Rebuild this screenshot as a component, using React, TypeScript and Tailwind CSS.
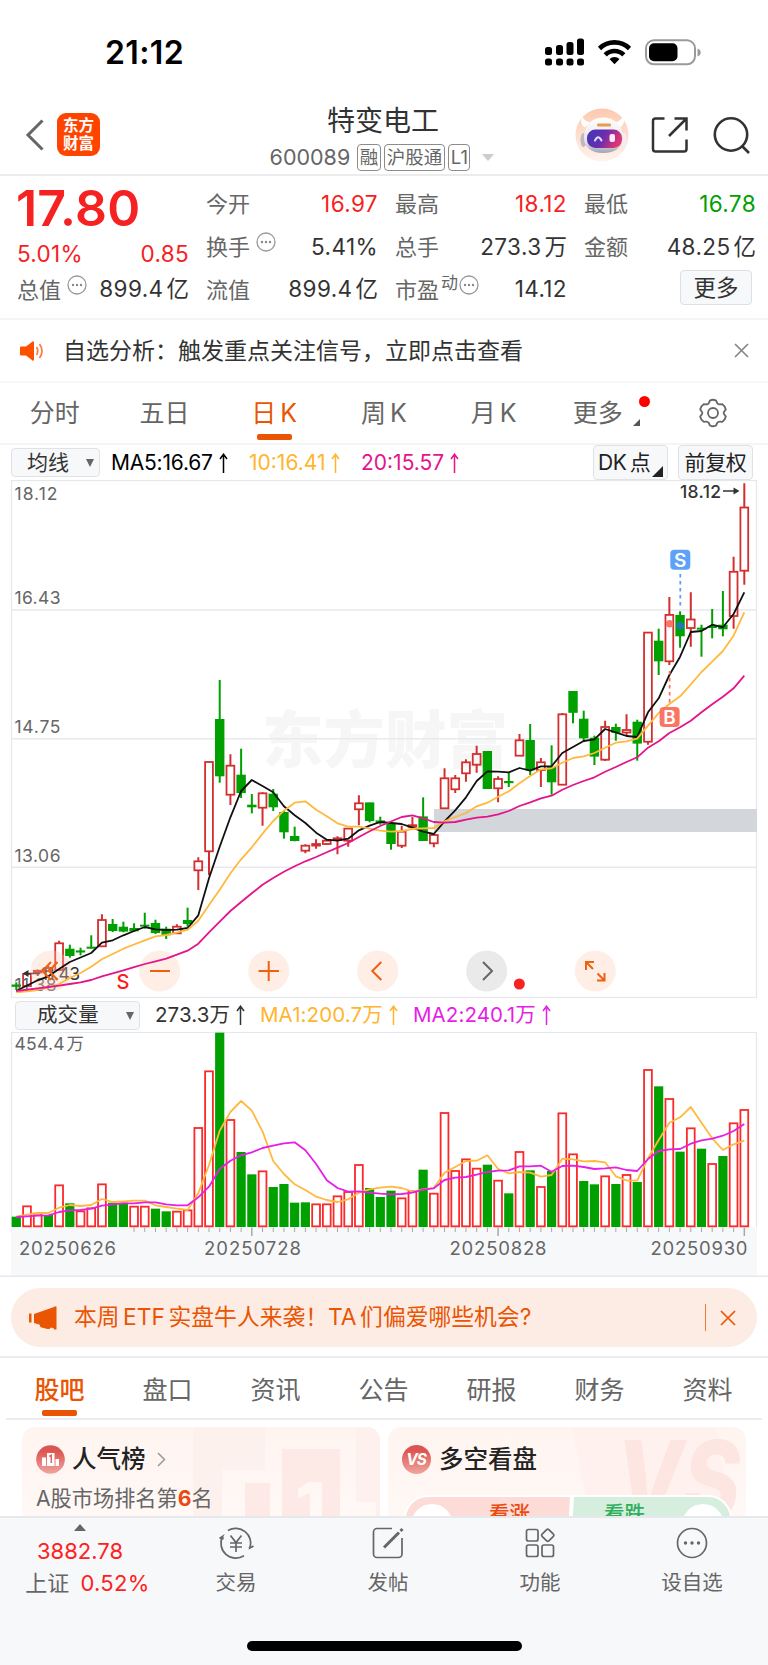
import type { ReactNode } from "react";

// [kind, high, top, bottom, low], kind "r" is hollow red, "g" is solid green
type Candle = ["r" | "g", number, number, number, number];

const CANDLES: Candle[] = [
  ["g", 982.3, 984.8, 986.5, 990], ["r", 973, 974, 986, 987], ["r", 969.5, 970.8, 972.5, 976],
  ["r", 966, 968, 971, 972], ["r", 940.7, 943.3, 970, 970], ["g", 944.7, 949, 955.7, 957.7],
  ["g", 947.7, 950.7, 952.2, 955.3], ["g", 935.3, 947, 948.4, 948.4], ["r", 914.3, 920, 946.3, 947],
  ["g", 919, 924.3, 930.7, 932], ["g", 921.7, 927, 931.3, 932.3], ["g", 923.3, 928.3, 931, 931.7],
  ["g", 912.7, 925, 926.3, 928.7], ["g", 919.7, 923.3, 932.7, 934], ["g", 926.7, 929, 935, 939],
  ["r", 924.3, 926.7, 933.3, 933.7], ["g", 907.7, 920.3, 923.7, 926.7], ["r", 857.3, 861.3, 870.3, 890],
  ["r", 761.7, 762, 851.3, 875.3], ["g", 680, 719.3, 776, 782.7], ["r", 754.3, 765.7, 794.7, 805],
  ["g", 748.7, 775, 792.7, 798], ["g", 794, 805, 807, 813.3], ["r", 792.3, 793.3, 807.7, 825.7],
  ["g", 789, 794, 807, 811], ["g", 811, 812.3, 832, 838.7], ["g", 826.7, 836.3, 840.7, 841.3],
  ["r", 844.3, 845.7, 850.7, 853.3], ["r", 839.3, 844, 845.6, 848.7], ["r", 839.7, 840.7, 844, 845],
  ["r", 836.3, 838.3, 840, 854.3], ["r", 828.3, 828.6, 840.7, 846.7], ["r", 795.3, 803.3, 809.3, 825.3],
  ["g", 802.7, 802.7, 820.7, 822.3], ["g", 816.7, 820.7, 823, 824.7], ["g", 822, 823, 843.7, 849.7],
  ["r", 825.7, 831.7, 845.7, 848], ["r", 817, 825.2, 826.8, 828.7], ["g", 797.3, 816.7, 840.7, 840.7],
  ["r", 833.3, 835, 843.3, 847.3], ["r", 768.3, 778.3, 808.3, 808.3], ["r", 775, 778.3, 789.3, 793],
  ["r", 759.3, 762.3, 773.3, 781.7], ["r", 745.7, 754, 764.7, 772.7], ["g", 751.3, 751.3, 788.7, 788.7],
  ["r", 776.3, 779, 788.3, 802.3], ["g", 772.7, 781.3, 782.9, 787], ["r", 734, 740.3, 755.7, 755.7],
  ["g", 724, 740.3, 770, 775], ["r", 758, 762.3, 770, 787], ["g", 745.3, 767.3, 782, 794.7],
  ["r", 713, 714.3, 784.7, 784.7], ["g", 691.3, 691.3, 712.5, 723.3], ["g", 710.7, 719, 738, 742],
  ["g", 735.7, 738, 756.3, 765], ["r", 720.7, 727, 759.7, 761], ["g", 723.7, 727.3, 732.5, 740.7],
  ["r", 714.3, 730, 732.5, 735.7], ["g", 719.7, 722, 743.3, 760.7], ["r", 632.3, 632.6, 741.7, 744.7],
  ["g", 628.7, 641, 661, 675], ["r", 597, 614.9, 661.3, 665], ["g", 611.3, 615.3, 636, 647.7],
  ["r", 592.3, 619.5, 628, 646.7], ["g", 624.7, 628, 629.4, 656.7], ["g", 609, 626.2, 627.7, 638.3],
  ["g", 591, 625, 629, 636.3], ["r", 556.7, 571.8, 616, 628.7], ["r", 483.3, 507.5, 570.7, 584.7],
];

const MA5 = [
  991, 985.5, 980.3, 976.3, 969, 962, 957.5, 953, 942.7, 940.3, 935.3, 931, 927, 929.3, 930, 929.7, 928,
  915.3, 878.3, 846.7, 817.3, 791, 780, 786, 792.3, 806.3, 815.3, 823, 832.7, 839.7, 840.7, 838.7, 830.3,
  825.7, 822, 823, 824, 827.7, 831.7, 834, 821.3, 810.3, 797.3, 781, 771.3, 771.7, 772.3, 768, 770.7,
  766.3, 766.3, 753, 747, 741, 739.3, 729, 732.3, 736, 737, 712.3, 698.3, 675, 656.7, 632, 631, 624.7,
  627.3, 614, 592.3,
];

const MA10 = [
  992.3, 991.3, 990, 987.3, 984, 978, 973, 966.7, 959.3, 954, 948.7, 944.5, 940.3, 936.3, 935, 932.7, 929.7,
  920.7, 905, 889.7, 873.3, 859.3, 847.3, 833.7, 821, 810.7, 802.7, 801.3, 809.7, 816.3, 823.3, 826.7,
  826.7, 828.7, 830.7, 831.7, 831, 829, 828.3, 828, 821.3, 817, 813, 806.3, 802.7, 796.7, 791.3, 783.3,
  776, 769.3, 768.3, 762.7, 758, 756.3, 753, 747.7, 742.7, 741.3, 738.7, 725.7, 713, 704, 696.3, 684.3,
  672, 661.7, 651, 635.7, 612.3,
];

const MA20 = [
  991, 989.7, 988.3, 987, 985.7, 984, 982.3, 980, 976.3, 973.3, 970.3, 967.2, 964, 961.3, 958.7, 954.7,
  950.7, 943.7, 932.3, 921.7, 911, 902, 893.3, 884.7, 878, 871.7, 866.3, 861.3, 857, 852.3, 847.7, 843, 837,
  831.3, 826, 821.5, 817, 815.3, 818.3, 822, 822.7, 822, 819.7, 817.7, 816.7, 814.3, 811, 806, 802.3, 798.3,
  795.7, 789.7, 785, 781, 777.3, 771.7, 767, 762, 757.3, 747.7, 741.3, 733, 727.3, 720.7, 712.3, 704.3,
  696.7, 688.3, 675.7,
];

// volume series use a 3x vertical unit, 711 is the base line
const VOLUME_COLORS = "grrgrgrrrggrrggrrrrgrggrggggrrrrrgggrrgrrrrrgrgrgrgrrggrgrgrgrgrgrgrr";
const VOLUMES = [
  680, 649, 671, 675, 586, 640, 664, 655, 583, 638, 638, 650, 650, 656, 664, 665, 661, 414, 244, 128, 390,
  486, 553, 544, 591, 582, 638, 637, 643, 643, 619, 606, 525, 594, 621, 602, 625, 604, 539, 611, 369, 543,
  508, 536, 524, 572, 610, 486, 541, 591, 543, 370, 493, 573, 583, 559, 582, 555, 576, 240, 289, 327, 485,
  415, 476, 522, 498, 400, 360,
];
const VOLUME_MA1 = [
  680, 674, 669, 669, 653, 645, 648, 645, 627, 636, 634, 632, 632, 646, 651, 656, 660, 610, 525, 422, 366,
  333, 362, 424, 513, 552, 583, 600, 620, 630, 636, 628, 608, 598, 593, 590, 594, 605, 598, 594, 548, 531,
  513, 512, 496, 537, 550, 546, 548, 560, 555, 506, 508, 514, 513, 517, 559, 571, 572, 505, 450, 398, 382,
  351, 398, 445, 480, 463, 452,
];
const VOLUME_MA2 = [
  681, 679, 677, 676, 666, 661, 660, 656, 647, 643, 640, 640, 637, 637, 643, 646, 646, 622, 590, 537, 512,
  496, 487, 474, 467, 460, 457, 481, 522, 571, 594, 605, 604, 608, 611, 613, 612, 608, 599, 595, 570, 563,
  561, 554, 546, 542, 541, 529, 529, 527, 545, 528, 527, 531, 537, 535, 532, 540, 543, 507, 483, 478, 477,
  461, 451, 446, 437, 423, 402,
];

const RED = "#d32f2f";
const GREEN = "#00a000";

const cx = (i: number) => 16.3 + i * 10.706;
const vy = (v: number) => v / 3 + 990;
const points = (values: number[]) => values.map((v, i) => `${cx(i).toFixed(1)},${v.toFixed(1)}`).join(" ");

function StatusBar() {
  return (
    <div className="flex h-[100px] items-center justify-between pt-1 pr-[67px] pl-[105px] text-black">
      <span className="pt-[2px] text-[32px] leading-none font-semibold tracking-[0.4px]">21:12</span>
      <svg width="156" height="28" viewBox="0 0 156 28">
        <g>
          <rect x="0" y="9" width="7" height="8" rx="2.5" />
          <rect x="11" y="7" width="7" height="10" rx="2.5" />
          <rect x="21.5" y="4" width="7" height="13" rx="2.5" />
          <rect x="32" y="0.5" width="7" height="16.5" rx="2.5" />
          <rect x="0" y="20.5" width="7" height="7" rx="2.5" />
          <rect x="11" y="20.5" width="7" height="7" rx="2.5" />
          <rect x="21.5" y="20.5" width="7" height="7" rx="2.5" />
          <rect x="32" y="20.5" width="7" height="7" rx="2.5" />
        </g>
        <g fill="none" stroke="#000" strokeWidth="4.6">
          <path d="M54.5 10.5a21.5 21.5 0 0 1 30 0" />
          <path d="M60.2 16.8a13.2 13.2 0 0 1 18.6 0" />
        </g>
        <path d="M64.5 21a7.5 7.5 0 0 1 10 0l-5 5.3z" />
        <rect x="101" y="2.3" width="49" height="24" rx="8" fill="none" stroke="#9a9a9a" strokeWidth="2" />
        <rect x="104" y="5.3" width="28.5" height="18" rx="5" />
        <path d="M152.5 10.5q3.2 1.2 3.2 4t-3.2 4z" fill="#9a9a9a" />
      </svg>
    </div>
  );
}

function Badge({ children }: { children: ReactNode }) {
  return (
    <span className="flex h-[27px] items-center rounded-[4px] border border-[#8c8c8c] px-[1.5px] text-[18.5px] leading-none text-[#666]">
      {children}
    </span>
  );
}

function Robot() {
  return (
    <svg width="54" height="56" viewBox="0 0 54 56">
      <defs>
        <linearGradient id="halo" x1="0" y1="0" x2="0" y2="1">
          <stop offset="0" stopColor="#fdc9af" />
          <stop offset="1" stopColor="#fff3ed" />
        </linearGradient>
        <linearGradient id="visor" x1="0" y1="0" x2="1" y2="0.3">
          <stop offset="0" stopColor="#4038b8" />
          <stop offset="0.55" stopColor="#6a2db0" />
          <stop offset="1" stopColor="#e03570" />
        </linearGradient>
        <linearGradient id="shell" x1="0" y1="0" x2="0" y2="1">
          <stop offset="0" stopColor="#fff" />
          <stop offset="0.7" stopColor="#e6e2e8" />
          <stop offset="1" stopColor="#9fa3b4" />
        </linearGradient>
      </defs>
      <circle cx="27" cy="28" r="26.5" fill="url(#halo)" />
      <path d="M7.5 9.5q-4 6 2 11l6-5q-6-1-8-6zM47.5 9.5q4 6-2 11l-6-5q6-1 8-6z" fill="#fff" />
      <ellipse cx="8.5" cy="33" rx="3" ry="7" fill="#bdb8c2" />
      <ellipse cx="48.5" cy="33" rx="3" ry="7" fill="#f2eef4" />
      <path d="M28 10.5c12 0 20 9 20 20 0 10-8 15.5-20 15.5S9 40 9 30.5c0-11 7-20 19-20z" fill="url(#shell)" />
      <rect x="22" y="16.5" width="14" height="3" rx="1" fill="#e99a54" />
      <rect x="12" y="22.5" width="35" height="18.5" rx="8.5" fill="url(#visor)" />
      <path d="M20 33.5q3-6.5 6.5 0" fill="none" stroke="#d3e4ff" strokeWidth="2" strokeLinecap="round" />
      <rect x="34.5" y="27" width="5.5" height="8" rx="2" fill="#ffe8fb" />
    </svg>
  );
}

function Header() {
  return (
    <header className="relative flex h-[76px] items-center justify-between border-b-2 border-[#ececec] pr-[16px] pb-[5px] pl-[25px]">
      <div className="flex items-center">
        <svg width="20" height="32" viewBox="0 0 20 32" fill="none" stroke="#666" strokeWidth="3">
          <path d="M17.5 1.5L3 16l14.5 14.5" />
        </svg>
        <div className="ml-[12px] flex h-[43px] w-[43px] flex-col items-center justify-center rounded-[9px] bg-[#ff4400] text-[15.5px] leading-[18px] font-bold text-white">
          <span>东方</span>
          <span>财富</span>
        </div>
      </div>
      <div className="absolute inset-x-0 top-0 flex flex-col items-center">
        <h1 className="mt-[6px] pr-[2px] text-[28px] leading-[30px] text-[#333]">特变电工</h1>
        <div className="mt-[8px] flex items-center pr-[2px]">
          <span className="mr-[7px] text-[21.5px] leading-none text-[#666]">600089</span>
          <div className="flex gap-[3.5px]">
            <Badge>融</Badge>
            <Badge>沪股通</Badge>
            <Badge>L1</Badge>
          </div>
          <span className="mr-[2px] ml-[12px] border-x-[6.5px] border-t-[7px] border-x-transparent border-t-[#ccc]" />
        </div>
      </div>
      <div className="flex items-center">
        <Robot />
        <svg className="ml-[22px]" width="38" height="38" viewBox="0 0 38 38" fill="none" stroke="#333" strokeWidth="2.5">
          <path d="M13.5 2.5H4.5a2.5 2.5 0 0 0-2.5 2.5V33a2.5 2.5 0 0 0 2.5 2.5H33a2.5 2.5 0 0 0 2.5-2.5V23.5M23.5 2.5H35.5V14.5M35 3L18 20" />
        </svg>
        <svg className="ml-[23px]" width="40" height="40" viewBox="0 0 40 40" fill="none" stroke="#333" strokeWidth="2.6">
          <circle cx="19" cy="19.5" r="16.2" />
          <path d="M30 31l7 7" />
        </svg>
      </div>
    </header>
  );
}

function InfoDot() {
  return (
    <svg className="mb-[10px] ml-[6px]" width="20" height="20" viewBox="0 0 20 20">
      <circle cx="10" cy="10" r="9" fill="none" stroke="#999" strokeWidth="1.3" />
      <g fill="#888">
        <circle cx="6" cy="10" r="1.2" />
        <circle cx="10" cy="10" r="1.2" />
        <circle cx="14" cy="10" r="1.2" />
      </g>
    </svg>
  );
}

function Stat({ label, value, unit, color = "text-[#333]", extra }: { label: string; value: string; unit?: string; color?: string; extra?: ReactNode }) {
  return (
    <div className="flex h-[42.7px] items-center justify-between leading-none">
      <span className="flex items-center text-[22px] text-[#666]">
        {label}
        {extra}
      </span>
      <span className={`text-[22.5px] tracking-[0.4px] ${color}`}>
        {value}
        {unit && <span className="ml-[3px] tracking-normal">{unit}</span>}
      </span>
    </div>
  );
}

function Quote() {
  return (
    <section className="grid h-[144px] grid-cols-4 gap-x-[17px] border-b-2 border-[#f5f5f5] pt-[7px] pr-[12px] pl-[17px]">
      <div>
        <div className="-ml-[1px] flex h-[50.4px] items-center text-[50px] leading-none font-semibold tracking-[0.2px] text-[#f62222]">17.80</div>
        <div className="flex h-[35px] items-center justify-between pt-[7px] text-[22.5px] leading-none tracking-[0.3px] text-[#f62222]">
          <span>5.01%</span>
          <span>0.85</span>
        </div>
        <Stat label="总值" value="899.4" unit="亿" extra={<InfoDot />} />
      </div>
      <div>
        <Stat label="今开" value="16.97" color="text-[#f62222]" />
        <Stat label="换手" value="5.41%" extra={<InfoDot />} />
        <Stat label="流值" value="899.4" unit="亿" />
      </div>
      <div>
        <Stat label="最高" value="18.12" color="text-[#f62222]" />
        <Stat label="总手" value="273.3" unit="万" />
        <Stat
          label="市盈"
          value="14.12"
          extra={
            <>
              <span className="mb-[13px] ml-[2px] text-[17px]">动</span>
              <span className="-ml-[5px]">
                <InfoDot />
              </span>
            </>
          }
        />
      </div>
      <div>
        <Stat label="最低" value="16.78" color="text-[#00a000]" />
        <Stat label="金额" value="48.25" unit="亿" />
        <div className="flex h-[42px] items-center justify-end pr-[4px] pb-[3px]">
          <button className="h-[35px] w-[72px] rounded-[4px] border border-[#dcdfe4] bg-[#f7f8fa] text-[22.5px] leading-none text-[#333]">更多</button>
        </div>
      </div>
    </section>
  );
}

function Notice() {
  return (
    <div className="flex h-[63px] items-center border-b-2 border-[#f7f7f7] pr-[19px] pl-[20px]">
      <svg width="24" height="20" viewBox="0 0 24 20">
        <path d="M0 6.5q0-1 1-1H6L12.5 0.5q1.5-1 1.5 1V18.5q0 2-1.5 1L6 14.5H1q-1 0-1-1z" fill="#ff5000" />
        <path d="M16.5 6q2.5 4 0 8M19.5 3q5 7 0 14" fill="none" stroke="#ff7a3c" strokeWidth="1.7" />
      </svg>
      <span className="ml-[19px] pt-[1px] text-[23px] leading-none text-[#333]">自选分析：触发重点关注信号，立即点击查看</span>
      <svg className="ml-auto" width="15" height="15" viewBox="0 0 15 15" stroke="#888" strokeWidth="1.7">
        <path d="M1 1l13 13M14 1L1 14" />
      </svg>
    </div>
  );
}

function PeriodTabs() {
  const tabs: [string, string][] = [["分时", ""], ["五日", ""], ["日", "K"], ["周", "K"], ["月", "K"]];
  return (
    <nav className="flex h-[62px] border-b-2 border-[#f5f5f5] text-[25px] leading-none text-[#666]">
      {tabs.map(([tab, suffix]) => (
        <div key={tab} className={`relative flex w-1/7 items-center justify-center ${tab === "日" ? "text-[#ea5504]" : ""}`}>
          {tab}
          {suffix && <span className="ml-[4px]">{suffix}</span>}
          {tab === "日" && <span className="absolute bottom-[3px] h-[6px] w-[35px] rounded-[2px] bg-[#ea5504]" />}
        </div>
      ))}
      <div className="relative flex w-1/7 items-center justify-center pr-[11px]">
        更多
        <span className="absolute top-[13px] right-[8.5px] h-[11px] w-[11px] rounded-full bg-[#ff0000]" />
        <svg className="absolute top-[36px] right-[18px]" width="7" height="7">
          <path d="M7 0V7H0z" fill="#555" />
        </svg>
      </div>
      <div className="flex w-1/7 items-center justify-center">
        <svg width="30" height="30" viewBox="0 0 30 30" fill="none" stroke="#666" strokeWidth="1.8">
          <path d="M12 2.5Q15 1 18 2.5L19.3 5.2Q20.2 6.5 21.8 6.4L24.3 6.2Q27.2 8 27.8 11.5L26 14Q25.4 15 26 16L27.8 18.5Q27.2 22 24.3 23.8L21.8 23.6Q20.2 23.5 19.3 24.8L18 27.5Q15 29 12 27.5L10.7 24.8Q9.8 23.5 8.2 23.6L5.7 23.8Q2.8 22 2.2 18.5L4 16Q4.6 15 4 14L2.2 11.5Q2.8 8 5.7 6.2L8.2 6.4Q9.8 6.5 10.7 5.2z" />
          <circle cx="15" cy="15" r="5" />
        </svg>
      </div>
    </nav>
  );
}

function Up() {
  return (
    <svg className="ml-[6px] inline-block align-[-3px]" width="9" height="20" viewBox="0 0 9 20" fill="none" stroke="currentColor" strokeWidth="1.5">
      <path d="M4.5 1V20M1 6L4.5 1.2L8 6" />
    </svg>
  );
}

function AverageRow() {
  return (
    <div className="flex h-[35px] items-center pr-[15px] pl-[11px] text-[21px] leading-none">
      <div className="flex h-[29px] w-[89px] items-center justify-between rounded-[4px] border border-[#dfe2e7] bg-[#f7f8fa] pr-[5px] pl-[15px] text-[#333]">
        均线
        <span className="border-x-[4.5px] border-t-[8px] border-x-transparent border-t-[#666]" />
      </div>
      <span className="ml-[11px] w-[138px] tracking-[-0.2px] text-black">MA5:16.67<Up /></span>
      <span className="w-[112px] text-[#ffb52e]">10:16.41<Up /></span>
      <span className="text-[#e3148c]">20:15.57<Up /></span>
      <div className="relative ml-auto flex h-[35px] w-[75px] items-center rounded-[4px] border border-[#dfe2e7] bg-[#f7f8fa] pl-[4px] tracking-[-0.3px] text-[#222]">
        DK<span className="ml-[3px]">点</span>
        <svg className="absolute right-[4px] bottom-[2px]" width="11" height="11">
          <path d="M11 0V11H0z" fill="#222" />
        </svg>
      </div>
      <div className="ml-[10px] flex h-[35px] w-[75px] items-center justify-center rounded-[4px] border border-[#dfe2e7] bg-[#f7f8fa] tracking-[-0.3px] text-[#222]">前复权</div>
    </div>
  );
}

function PriceChart() {
  const labels: [string, number][] = [["18.12", 500], ["16.43", 604], ["14.75", 733], ["13.06", 862], ["11.38", 991]];
  return (
    <svg className="block" width="768" height="518" viewBox="0 480 768 518">
      <rect x="11.5" y="480.5" width="745" height="517" fill="#fff" stroke="#e4e7ec" strokeWidth="1.2" />
      <text x="262" y="763" fontSize="62" fontWeight="900" fill="#f6f6f7" textLength="246" lengthAdjust="spacingAndGlyphs">东方财富</text>
      {[610, 738.7, 867.3].map((y) => (
        <path key={y} d={`M11 ${y}H757`} stroke="#e6e9f0" strokeWidth="1.4" />
      ))}
      <rect x="434" y="809" width="323" height="23" fill="#d3d6db" />
      {CANDLES.map(([kind, high, top, bottom, low], i) => {
        const x = cx(i);
        if (kind === "g") {
          return (
            <g key={i} fill={GREEN}>
              <rect x={x - 1} y={high} width="2" height={low - high} />
              <rect x={x - 4.7} y={top - 0.3} width="9.4" height={bottom - top + 0.6} />
            </g>
          );
        }
        return (
          <g key={i} fill="none" stroke={RED} strokeWidth="1.8">
            <path d={`M${x} ${high}V${top}M${x} ${bottom}V${low}`} strokeWidth="2" />
            <rect x={x - 3.9} y={top} width="7.8" height={bottom - top} />
          </g>
        );
      })}

      <g fontSize="17.5" fill="#666">
        {labels.map(([label, y]) => (
          <text key={label} x="14.5" y={y} textLength={label === "18.12" ? 43 : label === "11.38" ? 42 : 46}>{label}</text>
        ))}
      </g>
      <g fontSize="17.5" fill="#333">
        <text x="680" y="497.5" fontWeight="500" textLength="41">18.12</text>
        <text x="41" y="980" textLength="39">11.43</text>
      </g>
      <path d="M723 491H735M40 973.5H28" stroke="#333" strokeWidth="1.5" />
      <path d="M733.5 487.5L739.5 491L733.5 494.5zM28.5 970L22.5 973.5L28.5 977z" fill="#333" />
      <text x="116.5" y="988.5" fontSize="20" fill="#ff1a1a" fontWeight="500">S</text>

      {[51, 159.7, 268.7, 377.7, 595.3].map((x) => (
        <circle key={x} cx={x} cy="971" r="20.5" fill="#fbc9b0" fillOpacity="0.32" />
      ))}
      <circle cx="486.7" cy="971" r="20.5" fill="#eaeaea" />
      <g fill="none" strokeWidth="1.8" strokeLinejoin="round">
        <polyline points={points(MA5)} stroke="#111" />
        <polyline points={points(MA10)} stroke="#ffb93c" />
        <polyline points={points(MA20)} stroke="#e3148c" />
      </g>
      <g fill="none" stroke="#f0600f" strokeWidth="2">
        <path d="M51 962l-8.5 9l8.5 9M57.5 962l-8.5 9l8.5 9" />
        <path d="M150 971H170M258.5 971H279M268.7 961V981" />
        <path d="M381.3 962l-9 9l9 9" />
        <path d="M586 970V962H594M586 962l7 7M597.5 973.5l7 7M597 980.5H604.5V973" />
      </g>
      <path d="M483 962l9 9l-9 9" fill="none" stroke="#666" strokeWidth="2" />
      <circle cx="519.3" cy="984" r="5.5" fill="#f52222" />

      <path d="M680.3 574V606" stroke="#5a9ff8" strokeWidth="1.8" strokeDasharray="3.5 3.5" />
      <circle cx="680.3" cy="625.7" r="3.7" fill="#1f78b4" />
      <rect x="670.3" y="549.7" width="20" height="20" rx="4" fill="#5da1fa" />
      <text x="680.3" y="566.5" fontSize="19" fontWeight="600" fill="#fff" textAnchor="middle">S</text>
      <path d="M669.6 671V703" stroke="#fb7564" strokeWidth="1.8" strokeDasharray="3.5 3.5" />
      <circle cx="669.6" cy="623.7" r="3.7" fill="#fb7564" />
      <rect x="659.6" y="707" width="20" height="20" rx="4" fill="#fb7564" />
      <text x="669.6" y="723.8" fontSize="19" fontWeight="600" fill="#fff" textAnchor="middle">B</text>
    </svg>
  );
}

function VolumeRow() {
  return (
    <div className="flex h-[34px] items-center pl-[15px] text-[20.5px] leading-none tracking-[0.1px]">
      <div className="flex h-[29px] w-[125px] items-center justify-between rounded-[4px] border border-[#dfe2e7] bg-[#f7f8fa] pt-[1px] pr-[5px] pl-[21px] text-[#333]">
        成交量
        <span className="border-x-[4.5px] border-t-[8px] border-x-transparent border-t-[#666]" />
      </div>
      <span className="ml-[15px] w-[105px] text-[#333]">273.3万<Up /></span>
      <span className="w-[153px] text-[#ffb52e]">MA1:200.7万<Up /></span>
      <span className="text-[#e61ee6]">MA2:240.1万<Up /></span>
    </div>
  );
}

function VolumeChart() {
  const dates: [string, number][] = [["20250626", 19], ["20250728", 204], ["20250828", 449.5], ["20250930", 650.5]];
  return (
    <svg className="block" width="768" height="245" viewBox="0 1032 768 245">
      <rect x="11" y="1227" width="746" height="50" fill="#f7f8fa" />
      <path d="M11.5 1227V1032.5H756.5V1227" fill="none" stroke="#e4e7ec" strokeWidth="1.2" />
      <text x="14.5" y="1050" fontSize="17.5" fill="#666">
        <tspan textLength="50">454.4</tspan>
        <tspan x="66.5">万</tspan>
      </text>
      {VOLUMES.map((v, i) =>
        VOLUME_COLORS[i] === "g" ? (
          <rect key={i} x={cx(i) - 4.6} y={vy(v)} width="9.2" height={vy(711) - vy(v)} fill={GREEN} />
        ) : (
          <rect key={i} x={cx(i) - 3.9} y={vy(v)} width="7.8" height={vy(709) - vy(v)} fill="#fff" stroke="#fa2a2a" strokeWidth="1.8" />
        )
      )}
      <g fill="none" strokeWidth="1.8" strokeLinejoin="round">
        <polyline points={points(VOLUME_MA1.map(vy))} stroke="#ffb93c" />
        <polyline points={points(VOLUME_MA2.map(vy))} stroke="#e61ee6" />
      </g>
      {VOLUMES.map((_, i) =>
        i < 11 ? null : (
          <path key={i} d={`M${cx(i)} 1227.5V${[22, 45, 68].includes(i) ? 1236 : 1232}`} stroke="#a8a8a8" strokeWidth={[22, 45, 68].includes(i) ? 1.5 : 1} />
        )
      )}
      <g fontSize="18.5" fill="#666">
        {dates.map(([date, x]) => (
          <text key={date} x={x} y="1255" textLength="97">{date}</text>
        ))}
      </g>
      <path d="M0 1276.3H768" stroke="#e6e8ec" strokeWidth="1.5" />
    </svg>
  );
}

function Banner() {
  return (
    <div className="h-[81px] border-b-2 border-[#ededf0] px-[11px] pt-[11px]">
      <div className="flex h-[59px] items-center rounded-full bg-[#fdece4] pr-[21px] pl-[18px] text-[#ea5504]">
        <svg width="28" height="24" viewBox="0 0 28 24" fill="#ea5504">
          <path d="M0 7.5h2.5v9H0zM5 8L25 1V0.5h2.5V23.5H25V22.5L22 21.5Q21 23.5 18.5 23L12.5 21.5Q10.5 21 10.8 18.8L5 17z" />
        </svg>
        <span className="ml-[17px] text-[22.8px] leading-none">
          本周<span className="mx-[3.5px]">ETF</span>实盘牛人来袭！<span className="mr-[3.5px]">TA</span>们偏爱哪些机会?
        </span>
        <span className="ml-auto h-[27px] w-[1.5px] bg-[#ee7a3c]" />
        <svg className="ml-[14px]" width="16" height="16" viewBox="0 0 16 16" stroke="#ea5504" strokeWidth="1.7">
          <path d="M1 1l14 14M15 1L1 15" />
        </svg>
      </div>
    </div>
  );
}

function SectionTabs() {
  return (
    <nav className="mx-[6px] flex h-[62px] border-b-2 border-[#ededf0] text-[25px] leading-none text-[#666]">
      {["股吧", "盘口", "资讯", "公告", "研报", "财务", "资料"].map((tab, i) => (
        <div key={tab} className={`relative flex flex-1 items-center justify-center pt-[4px] pr-[1px] ${i === 0 ? "font-medium text-[#ea5504]" : ""}`}>
          {tab}
          {i === 0 && <span className="absolute bottom-[2px] h-[6px] w-[35px] rounded-[2px] bg-[#ea5504]" />}
        </div>
      ))}
    </nav>
  );
}

function Cards() {
  return (
    <div className="flex h-[96px] gap-[8px] overflow-hidden px-[22px] pt-[7px]">
      <div className="relative h-[120px] flex-1 overflow-hidden rounded-[13px] bg-gradient-to-b from-[#fff4f0] to-[#fffaf8] pt-[18px] pl-[14px]">
        <svg className="absolute top-0 right-0" width="190" height="92" viewBox="0 0 190 92">
          <path d="M3 0H75V43H32V92H3z" fill="#fdf1ee" />
          <path d="M55 56H80V92H55zM92 22H150V92H132V55H118L108 62V71L120 66V92H92z" fill="#fde9e6" />
          <path d="M166 0H190V92H186V75H166z" fill="#fef0ec" />
        </svg>
        <div className="relative flex items-center">
          <svg width="29" height="29" viewBox="0 0 29 29">
            <defs>
              <linearGradient id="medal" x1="0" y1="0" x2="0" y2="1">
                <stop offset="0.2" stopColor="#dc5552" />
                <stop offset="1" stopColor="#f0a5a0" />
              </linearGradient>
            </defs>
            <circle cx="14.5" cy="14.5" r="14.3" fill="url(#medal)" />
            <path d="M6 12.5H10V21H6zM11 8H18.5V21H11zM19.5 14H23V21H19.5z" fill="#fff" />
            <path d="M13.3 11.5l2-1.2V18" stroke="#df6260" strokeWidth="1.5" fill="none" />
          </svg>
          <span className="ml-[7px] text-[24.5px] leading-none font-medium text-[#222]">人气榜</span>
          <svg className="ml-[11px]" width="9" height="19" viewBox="0 0 9 19" fill="none" stroke="#999" strokeWidth="1.5">
            <path d="M1 3l6.5 6.5L1 16" />
          </svg>
        </div>
        <p className="relative mt-[14px] text-[21.2px] leading-none text-[#666]">
          A股市场排名第<b className="font-bold text-[#ea4a10]">6</b>名
        </p>
      </div>
      <div className="relative h-[120px] flex-1 overflow-hidden rounded-[13px] bg-gradient-to-b from-[#fff4f0] to-[#fffaf8] pt-[18px] pl-[14px]">
        <svg className="absolute top-0 right-0" width="180" height="92" viewBox="0 0 180 92">
          <path d="M6 0H150L164 92H24z" fill="#fef1ee" />
          <text x="50" y="92" fontSize="108" fontWeight="800" fontStyle="italic" fill="#fde5e1" textLength="124" lengthAdjust="spacingAndGlyphs">VS</text>
        </svg>
        <div className="relative flex items-center">
          <div className="flex h-[29px] w-[29px] items-center justify-center rounded-full bg-gradient-to-b from-[#dc5552] from-20% to-[#f0a5a0] pr-[1px] text-[15.5px] leading-none font-bold tracking-[-1px] text-white italic">VS</div>
          <span className="ml-[8px] text-[24.5px] leading-none font-medium text-[#222]">多空看盘</span>
        </div>
        <svg className="absolute top-[68px] left-[16px]" width="328" height="52" viewBox="0 0 328 52">
          <path d="M24 1H167L164 52H1V24A23 23 0 0 1 24 1z" fill="#fddbd6" stroke="#fff" strokeWidth="2" />
          <path d="M169 1H304A23 23 0 0 1 327 24V52H166z" fill="#d5eedd" stroke="#fff" strokeWidth="2" />
          <circle cx="28" cy="30" r="21" fill="#fff" />
          <circle cx="299" cy="30" r="21" fill="#fff" />
          <text x="85" y="26" fontSize="20.5" fontWeight="500" fill="#ea4a10">看涨</text>
          <text x="200" y="26" fontSize="20.5" fontWeight="500" fill="#2fae5c">看跌</text>
        </svg>
      </div>
    </div>
  );
}

function NavItem({ label, children }: { label: string; children: ReactNode }) {
  return (
    <div className="flex w-[152px] flex-col items-center pt-[8px] text-[20.5px] leading-none text-[#666]">
      <svg width="36" height="34" viewBox="0 0 36 34" fill="none" stroke="#666" strokeWidth="1.7">
        {children}
      </svg>
      <span className="mt-[13px]">{label}</span>
    </div>
  );
}

function BottomNav() {
  return (
    <footer className="h-[149px] border-t-2 border-[#e6e8ec] bg-[#f7f8fa]">
      <div className="flex h-[123px]">
        <div className="flex w-[160px] flex-col items-center pt-[6px] text-[22px] leading-none text-[#ff2020]">
          <span className="border-x-[6px] border-b-[7px] border-x-transparent border-b-[#666]" />
          <span className="mt-[9px]">3882.78</span>
          <span className="mt-[10px] flex pl-[15px] tracking-[0.3px]">
            <span className="mr-[11px] text-[22px] tracking-normal text-[#666]">上证</span>0.52%
          </span>
        </div>
        <NavItem label="交易">
          <path d="M10 4.5A15 15 0 0 1 32 22l3.5-2M32 22l-1-1M26 29.8A15 15 0 0 1 4.5 10.5l-3 2M4.5 10.5l.5 3" />
          <path d="M12.5 9.5l5.5 7l5.5-7M12 17H24M12 21H24M18 16.5V26" />
        </NavItem>
        <NavItem label="发帖">
          <path d="M22 2.5H7A3.5 3.5 0 0 0 3.5 6V28A3.5 3.5 0 0 0 7 31.5H28.5A3.5 3.5 0 0 0 32 28V12" />
          <path d="M14 21.5L29 6.5" strokeWidth="3" />
          <path d="M30.5 5L32.5 3" strokeWidth="3" />
        </NavItem>
        <NavItem label="功能">
          <rect x="4.5" y="3.5" width="11.5" height="11.5" rx="2" />
          <rect x="4.5" y="19" width="11.5" height="11.5" rx="2" />
          <rect x="20" y="19" width="11.5" height="11.5" rx="2" />
          <rect x="21" y="4.5" width="9.5" height="9.5" rx="1.5" transform="rotate(45 25.75 9.25)" />
        </NavItem>
        <NavItem label="设自选">
          <circle cx="18" cy="17" r="14.5" />
          <g fill="#666" stroke="none">
            <circle cx="11.5" cy="17" r="1.7" />
            <circle cx="18" cy="17" r="1.7" />
            <circle cx="24.5" cy="17" r="1.7" />
          </g>
        </NavItem>
      </div>
      <div className="mx-auto h-[10px] w-[275px] rounded-full bg-black" />
    </footer>
  );
}

export default function App() {
  return (
    <main className="h-[1665px] w-[768px] overflow-hidden bg-white font-['Inter','Noto_Sans_CJK_SC',sans-serif]">
      <StatusBar />
      <Header />
      <Quote />
      <Notice />
      <PeriodTabs />
      <AverageRow />
      <PriceChart />
      <VolumeRow />
      <VolumeChart />
      <Banner />
      <SectionTabs />
      <Cards />
      <BottomNav />
    </main>
  );
}
